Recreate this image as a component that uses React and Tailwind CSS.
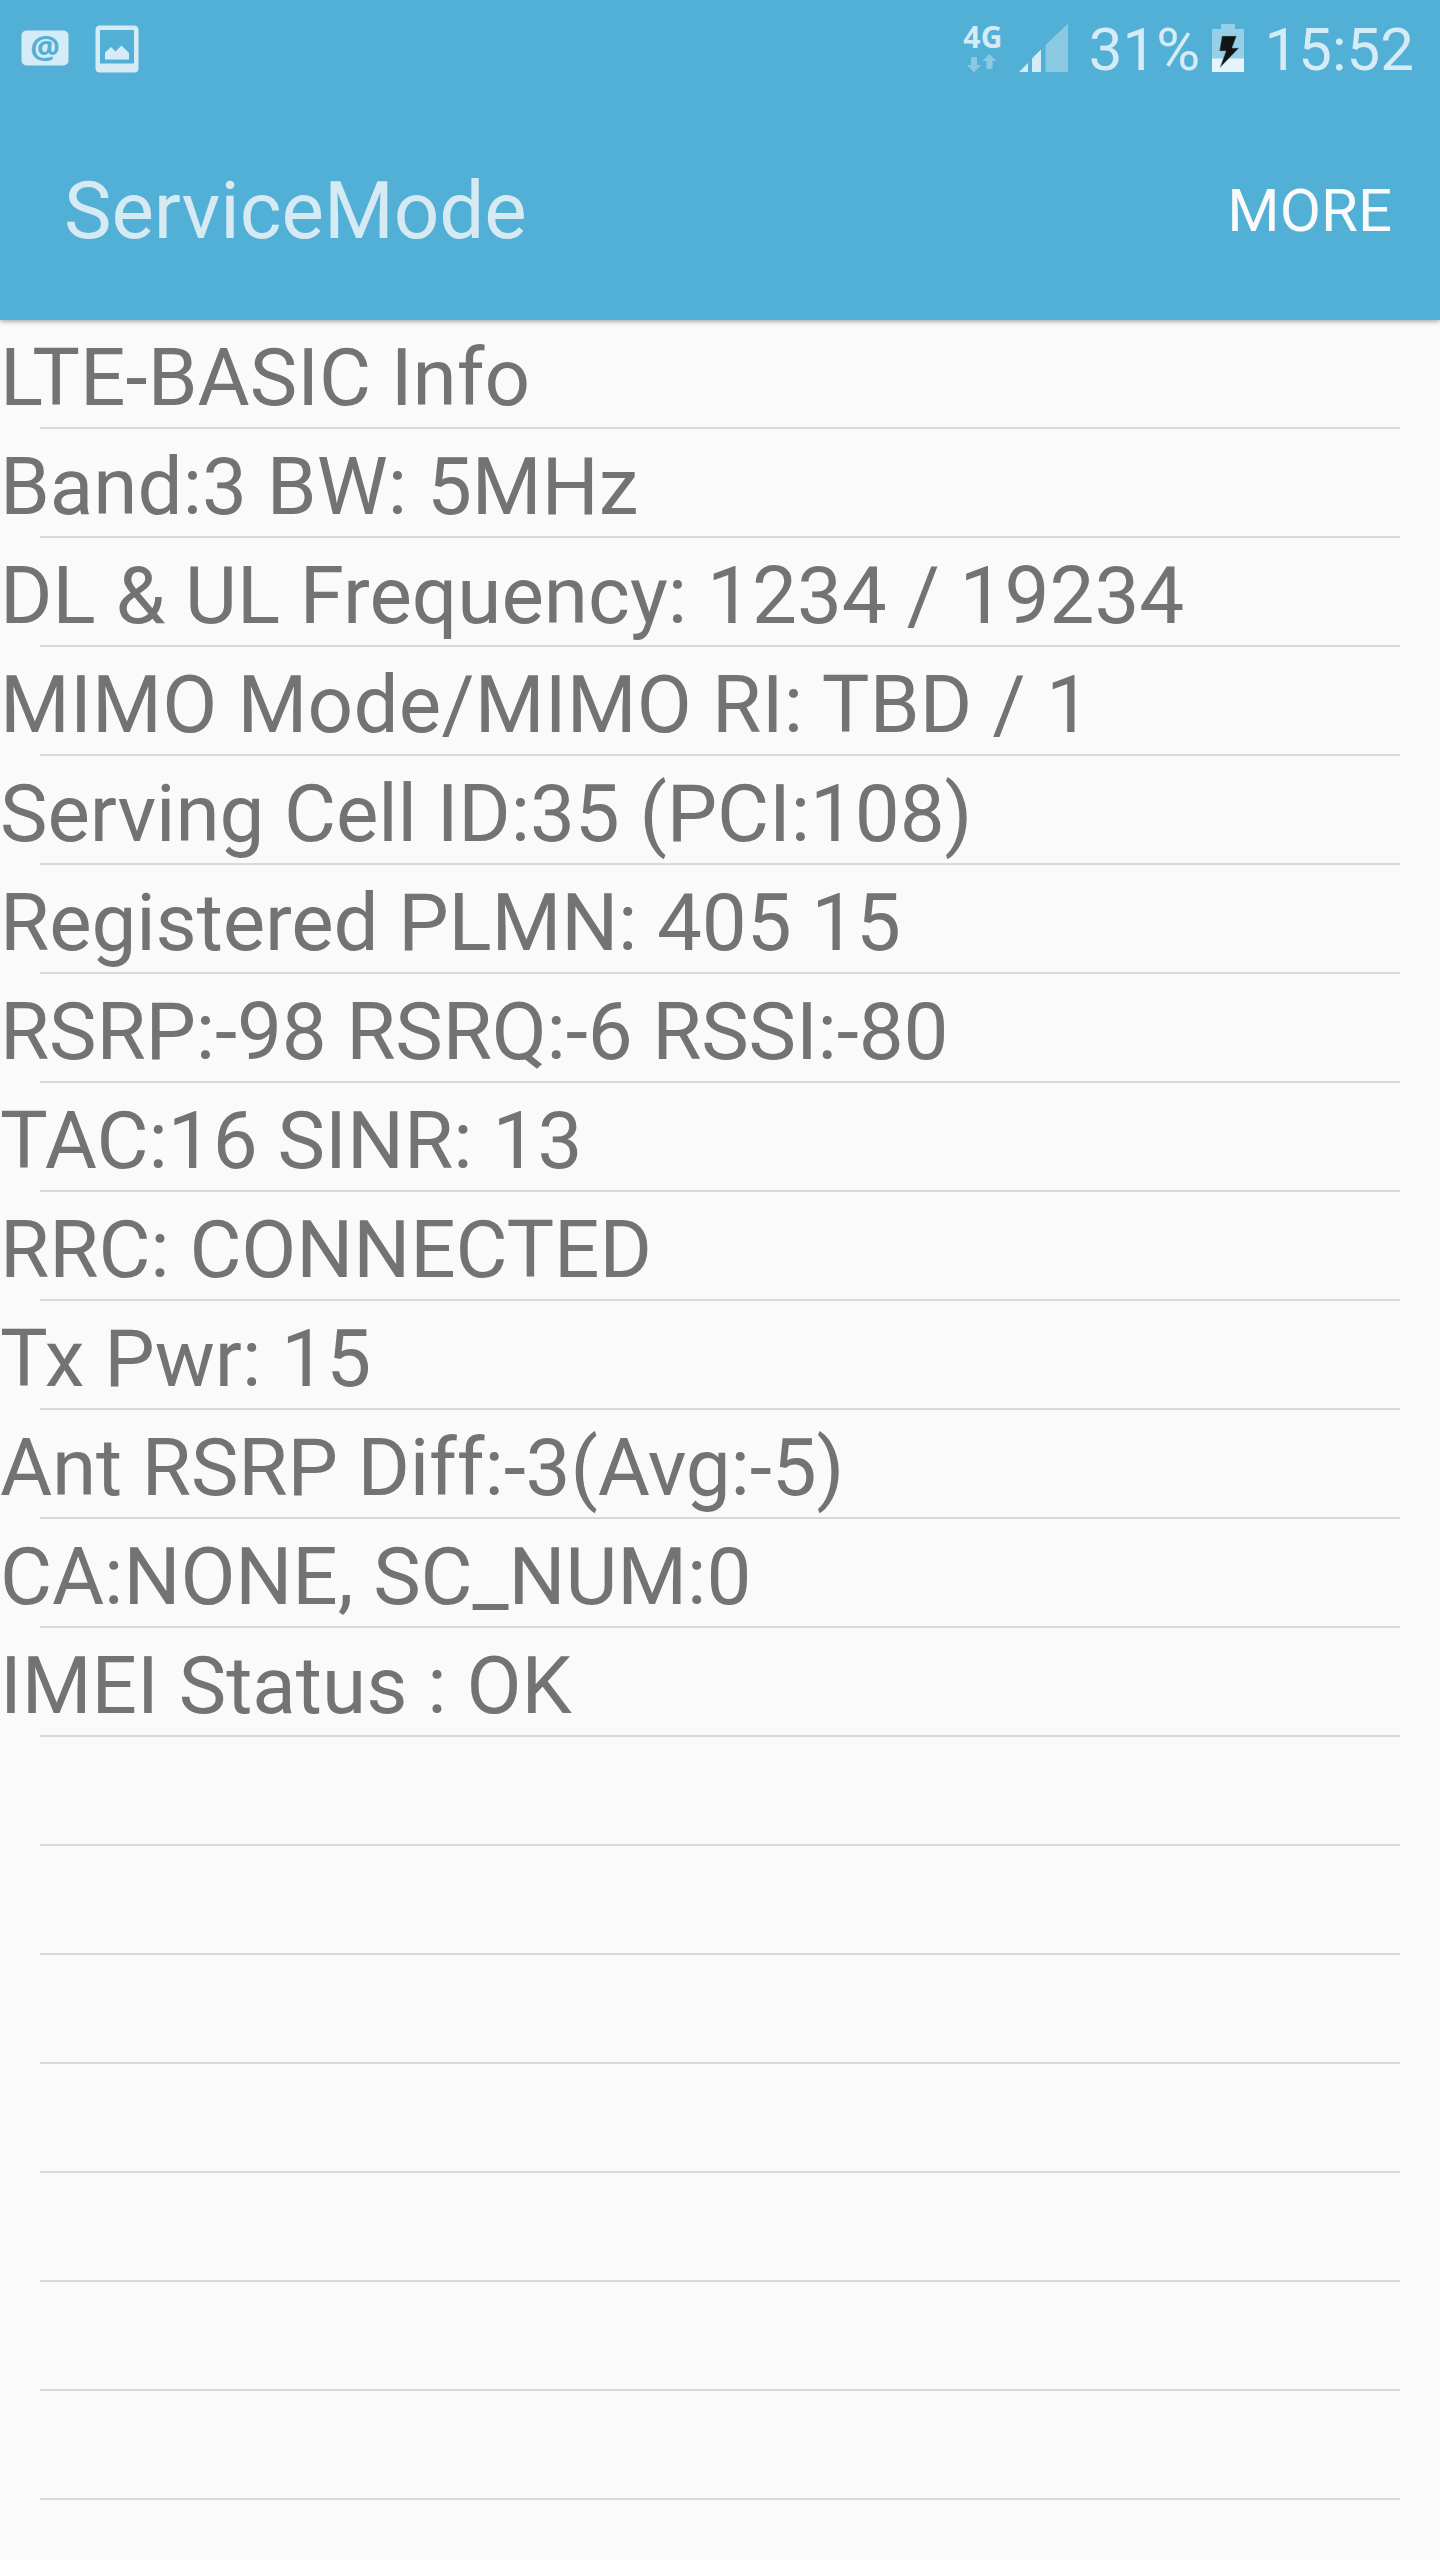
const filas = [
  { texto: 'LTE-BASIC Info', clase: '' },
  { texto: 'Band:3 BW: 5MHz', clase: '' },
  { texto: 'DL & UL Frequency: 1234 / 19234', clase: '' },
  { texto: 'MIMO Mode/MIMO RI: TBD / 1', clase: 'tracking-[0.23px]' },
  { texto: 'Serving Cell ID:35 (PCI:108)', clase: 'tracking-[-0.11px]' },
  { texto: 'Registered PLMN: 405 15', clase: 'tracking-[-0.14px]' },
  { texto: 'RSRP:-98 RSRQ:-6 RSSI:-80', clase: 'tracking-[-0.18px]' },
  { texto: 'TAC:16 SINR: 13', clase: '' },
  { texto: 'RRC: CONNECTED', clase: 'tracking-[-0.1px]' },
  { texto: 'Tx Pwr: 15', clase: '' },
  { texto: 'Ant RSRP Diff:-3(Avg:-5)', clase: 'tracking-[-0.15px]' },
  { texto: 'CA:NONE, SC_NUM:0', clase: 'tracking-[-0.08px]' },
  { texto: 'IMEI Status : OK', clase: '' },
  { texto: '', clase: '' },
  { texto: '', clase: '' },
  { texto: '', clase: '' },
  { texto: '', clase: '' },
  { texto: '', clase: '' },
  { texto: '', clase: '' },
  { texto: '', clase: '' },
];

function MailIcon() {
  return (
    <svg width="48" height="36" viewBox="0 0 48 36" overflow="visible">
      <rect x="0.5" y="0.5" width="47" height="35" rx="5" fill="#d5ebf5" />
      <text x="24" y="28.5" textAnchor="middle" fontSize="33" fontWeight="700" fontFamily="Noto Sans" fill="#52afd5">@</text>
    </svg>
  );
}

function ImageIcon() {
  return (
    <svg width="44" height="48" viewBox="0 0 44 48">
      <path fillRule="evenodd" fill="#d5ebf5" d="M5 0.5H39Q43.5 0.5 43.5 5V43Q43.5 47.5 39 47.5H5Q0.5 47.5 0.5 43V5Q0.5 0.5 5 0.5ZM5 5V38.5H39V5Z" />
      <path fill="#d5ebf5" d="M10 34.5V27.5L16 22L20.5 26.5L26.5 20.5L34 28V34.5Z" />
    </svg>
  );
}

function NetworkIcon() {
  return (
    <div className="flex w-[44px] flex-col">
      <span className="h-[33px] font-['Noto_Sans'] text-[30px] leading-[32px] font-bold tracking-[0.5px]">4G</span>
      <svg className="ml-[4px]" width="30" height="20" viewBox="0 0 30 20" fill="#8bc9e2">
        <path d="M4 3H10V11H14L7 18.5L0 11H4Z" />
        <path d="M19.5 15V7H15.5L22.5 0L29.5 7H25.5V15Z" />
      </svg>
    </div>
  );
}

function SignalIcon() {
  return (
    <svg width="50" height="49" viewBox="0 0 50 49">
      <path fill="#d5ebf5" d="M0 49L9 40V49Z" />
      <path fill="#d5ebf5" d="M13 49V35.5L22 26.5V49Z" />
      <path fill="#8bc9e2" d="M26.5 49V22L49 0.5V49Z" />
    </svg>
  );
}

function BatteryIcon() {
  return (
    <svg width="32" height="48" viewBox="0 0 32 48">
      <path fill="#97d0e6" d="M9 0H23V5H32V35H0V5H9Z" />
      <rect y="34.5" width="32" height="13.5" fill="#e6f4f9" />
      <path fill="#141414" stroke="#69a9c2" strokeWidth="0.5" d="M10 12H24.5L20 24H27L8 43.5L14 27H7.5Z" />
    </svg>
  );
}

function StatusBar() {
  return (
    <div className="flex h-[96px] items-start justify-between pr-[26px] pl-[21px] text-[60px] leading-[70px] text-[#d5ebf5]">
      <div className="flex">
        <div className="pt-[30px]"><MailIcon /></div>
        <div className="ml-[26px] pt-[24.5px]"><ImageIcon /></div>
      </div>
      <div className="flex">
        <div className="pt-[21px]"><NetworkIcon /></div>
        <div className="ml-[12px] pt-[23px]"><SignalIcon /></div>
        <span className="ml-[19.5px] pt-[15px]">31%</span>
        <div className="ml-[11.5px] pt-[24px]"><BatteryIcon /></div>
        <span className="ml-[21px] pt-[15px]">15:52</span>
      </div>
    </div>
  );
}

export default function App() {
  return (
    <div className="h-[2560px] w-[1440px] overflow-hidden bg-[#fafafa] font-[Roboto,sans-serif]">
      <header className="relative h-[320px] bg-[#52afd5] shadow-[0_1px_5px_rgba(0,0,0,0.4)]">
        <StatusBar />
        <div className="flex h-[224px] items-center justify-between pt-[6px] pr-[48px] pl-[64px]">
          <h1 className="text-[80px] leading-[94px] tracking-[-0.05px] text-[#d6eaf4]">ServiceMode</h1>
          <button className="text-[60px] leading-[70px] text-[#fafafa]">MORE</button>
        </div>
      </header>
      <ul>
        {filas.map((fila, i) => (
          <li key={i}>
            <div className="h-[107px] pt-[11px] text-[80px] leading-[94px] whitespace-nowrap text-[#737373]">
              <span className={fila.clase}>{fila.texto}</span>
            </div>
            <div className="mx-[40px] h-[2px] bg-[#d9d9d9]" />
          </li>
        ))}
      </ul>
    </div>
  );
}
